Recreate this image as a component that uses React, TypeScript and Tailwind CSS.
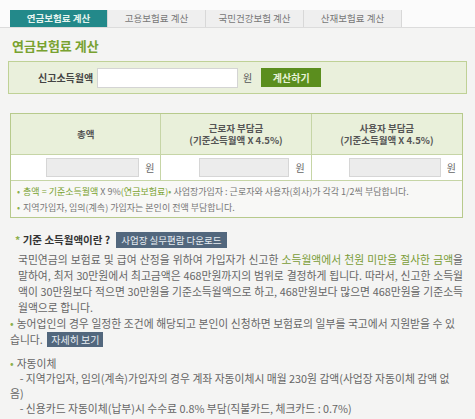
import React from 'react';

const tabs = ['연금보험료 계산', '고용보험료 계산', '국민건강보험 계산', '산재보험료 계산'];

function Dot() {
  return <span className="mr-[3px] text-[#8cb04c]">•</span>;
}

function WonField({ inputW }: { inputW: string }) {
  return (
    <div className="flex items-center justify-end gap-[6px] pr-[6px]">
      <div className={`h-[19px] ${inputW} border border-[#d6d6d6] bg-[#ececec]`} />
      <span className="text-[10px] text-[#666]">원</span>
    </div>
  );
}

export default function App() {
  return (
    <div
      className="h-[419px] w-[475px] overflow-hidden bg-[#f4f4f3] text-[#555]"
      style={{ fontFamily: '"Noto Sans CJK KR", "Noto Sans", sans-serif' }}
    >
      <div className="flex border-b border-[#dcdcdc] bg-[#fbfbfb] pl-[10px] pt-[10px]">
        {tabs.map((t, i) => (
          <div
            key={t}
            className={`flex h-[17px] w-[98px] items-center justify-center border-r border-[#d8d8d8] text-[9.5px] ${
              i === 0 ? 'bg-[#23898a] font-bold text-[#e6f4ef]' : 'bg-[#efefef] text-[#777]'
            }`}
          >
            {t}
          </div>
        ))}
      </div>

      <h2 className="mt-[10px] pl-[12px] text-[13px] font-bold leading-[16px] text-[#79a230]">연금보험료 계산</h2>

      <div className="mx-[8px] mt-[7px] flex h-[33px] items-center border border-[#bfd196] bg-[#eaf0dc] pl-[29px]">
        <span className="w-[59px] text-[10px] font-bold text-[#444]">신고소득월액</span>
        <div className="h-[20px] w-[141px] border border-[#d4d4d4] bg-white" />
        <span className="ml-[5px] text-[10px] text-[#555]">원</span>
        <button className="ml-[9px] flex h-[19px] w-[60px] items-center justify-center bg-[#5b8e1e] text-[10px] font-bold text-[#e8f3d8]">
          계산하기
        </button>
      </div>

      <div className="mx-[10px] mt-[19px] w-[453px] border border-[#b7ca8c]">
        <div className="grid h-[40px] grid-cols-3 bg-[#e9f0da] text-[9.5px] font-bold leading-[12px] text-[#555]">
          <div className="flex items-center justify-center border-r border-[#c6d5a6]">총액</div>
          <div className="flex flex-col items-center justify-center border-r border-[#c6d5a6]">
            <span>근로자 부담금</span>
            <span>(기준소득월액 X 4.5%)</span>
          </div>
          <div className="flex flex-col items-center justify-center">
            <span>사용자 부담금</span>
            <span>(기준소득월액 X 4.5%)</span>
          </div>
        </div>
        <div className="grid h-[26px] grid-cols-3 border-t border-[#c6d5a6] bg-white">
          <div className="flex items-center justify-end border-r border-[#c6d5a6]">
            <WonField inputW="w-[93px]" />
          </div>
          <div className="flex items-center justify-end border-r border-[#c6d5a6]">
            <WonField inputW="w-[90px]" />
          </div>
          <div className="flex items-center justify-end">
            <WonField inputW="w-[92px]" />
          </div>
        </div>
        <div className="flex h-[37px] flex-col justify-center gap-[3px] border-t border-[#c6d5a6] bg-[#f8f8f6] pl-[6px] text-[9px] leading-[13px] text-[#777]">
          <p>
            <Dot />
            <span className="text-[#79a230]">총액 = 기준소득월액</span> X 9%
            <span className="text-[#79a230]">(연금보험료)</span>
            <span className="text-[#8cb04c]">•</span> 사업장가입자 : 근로자와 사용자(회사)가 각각 1/2씩 부담합니다.
          </p>
          <p>
            <Dot />
            지역가입자, 임의(계속) 가입자는 본인이 전액 부담합니다.
          </p>
        </div>
      </div>

      <div className="mt-[14px] flex items-center pl-[15px]">
        <span className="text-[10.5px] font-bold text-[#333]">
          <span className="text-[#8cb04c]">*</span> 기준 소득월액이란 ?
        </span>
        <button className="ml-[6px] flex h-[16px] items-center bg-[#52677d] px-[5px] text-[9.5px] text-[#e8edf2]">
          사업장 실무편람 다운로드
        </button>
      </div>

      <p className="mt-[3px] pl-[18px] pr-[12px] text-justify text-[10.8px] leading-[16px] text-[#666]">
        국민연금의 보험료 및 급여 산정을 위하여 가입자가 신고한{' '}
        <span className="text-[#7a9c36]">소득월액에서 천원 미만을 절사한 금액</span>을 말하여, 최저 30만원에서
        최고금액은 468만원까지의 범위로 결정하게 됩니다. 따라서, 신고한 소득월액이 30만원보다 적으면 30만원을
        기준소득월액으로 하고, 468만원보다 많으면 468만원을 기준소득월액으로 합니다.
      </p>

      <p className="mt-0 pl-[10px] pr-[20px] text-justify text-[10.8px] leading-[16px] text-[#666]">
        <Dot />
        농어업인의 경우 일정한 조건에 해당되고 본인이 신청하면 보험료의 일부를 국고에서 지원받을 수 있습니다.{' '}
        <span className="ml-[2px] inline-block bg-[#52677d] px-[4px] text-[10px] leading-[15px] text-[#e8edf2]">
          자세히 보기
        </span>
      </p>

      <div className="mt-[9px] break-all pl-[10px] pr-[14px] text-[10.8px] leading-[15px] text-[#666]">
        <p>
          <Dot />
          자동이체
        </p>
        <p>
          {'\u00a0\u00a0\u00a0\u00a0'}- 지역가입자, 임의(계속)가입자의 경우 계좌 자동이체시 매월 230원 감액(사업장 자동이체 감액 없음)
        </p>
        <p>{'\u00a0\u00a0\u00a0\u00a0'}- 신용카드 자동이체(납부)시 수수료 0.8% 부담(직불카드, 체크카드 : 0.7%)</p>
      </div>
    </div>
  );
}
